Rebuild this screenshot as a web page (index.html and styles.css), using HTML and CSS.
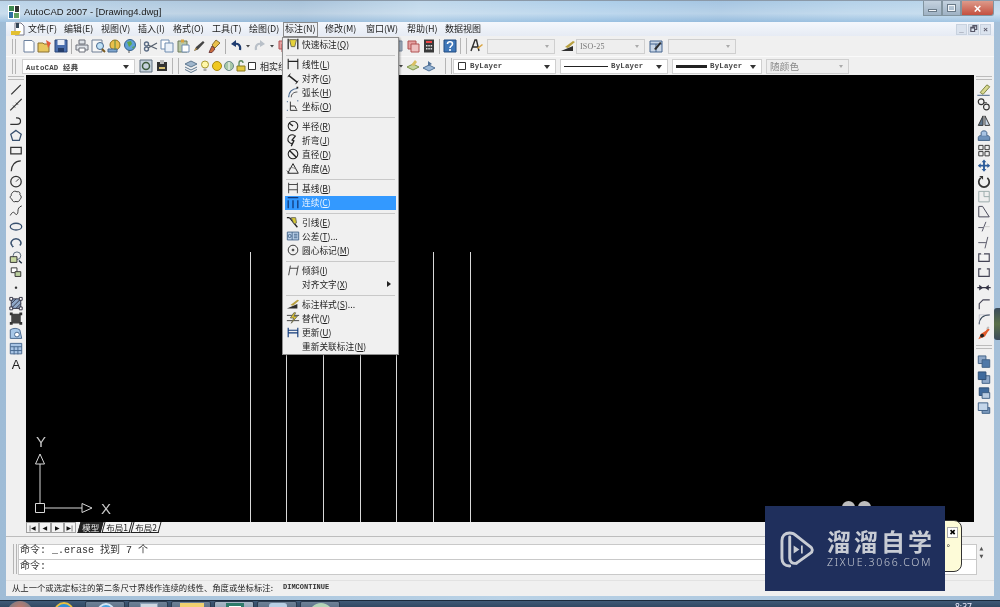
FILE: index.html
```html
<!DOCTYPE html>
<html lang="zh-CN">
<head>
<meta charset="utf-8">
<title>AutoCAD 2007 - [Drawing4.dwg]</title>
<link rel="stylesheet" href="styles.css">
</head>
<body>
<svg class="defs" aria-hidden="true">
<defs>
<symbol id="new" viewBox="0 0 16 16"><path d="M3 2.500h8l2 2v9.500H3z" fill="#fff" stroke="#6a7f9c"/></symbol>
<symbol id="open" viewBox="0 0 16 16"><path d="M1 5h5l1 1h5v8H1z" fill="#e8c860" stroke="#8a7030"/><path d="M9 2l5 3-3 5z" fill="#e25b3a"/></symbol>
<symbol id="save" viewBox="0 0 16 16"><path d="M2 2h12v12H2z" fill="#4a6fae" stroke="#2b4678"/><path d="M4.500 2h7v5h-7z" fill="#e9eef6"/><path d="M5 10h6v4H5z" fill="#243d6b"/></symbol>
<symbol id="print" viewBox="0 0 16 16"><path d="M5 2h6v4H5zM2 7h12v5H2z" fill="#dfe3e8" stroke="#6a6f78"/><path d="M5 10h6v4H5z" fill="#fff" stroke="#6a6f78"/></symbol>
<symbol id="preview" viewBox="0 0 16 16"><path d="M2 2h10v12H2z" fill="#f6f6f6" stroke="#6f7f95"/><circle cx="10" cy="8" r="3.500" fill="#bfe0f5" stroke="#47688f"/><path d="M12 11l3 3" stroke="#7a5a20" stroke-width="2"/></symbol>
<symbol id="publish" viewBox="0 0 16 16"><circle cx="9" cy="7" r="5" fill="#e9c04a" stroke="#927420"/><path d="M2 11h9v3H2z" fill="#7fa6cf" stroke="#47688f"/><path d="M9 2v10" stroke="#5c8a3a"/></symbol>
<symbol id="globe" viewBox="0 0 16 16"><circle cx="8" cy="7" r="5.500" fill="#5fa0d8" stroke="#34608e"/><path d="M5 4l4-1 1 3-3 3zM10 9l3-1-2 3z" fill="#5da54a"/><path d="M7 12.500v2.500" stroke="#555"/></symbol>
<symbol id="cut" viewBox="0 0 16 16"><circle cx="3.500" cy="6" r="2" fill="none" stroke="#5b6c85" stroke-width="1.400"/><circle cx="3.500" cy="11" r="2" fill="none" stroke="#5b6c85" stroke-width="1.400"/><path d="M5 7l9 4M5 10l9-5" stroke="#56606e" stroke-width="1.300"/></symbol>
<symbol id="copy" viewBox="0 0 16 16"><path d="M2 2h8v9H2z" fill="#fff" stroke="#6f8cb0"/><path d="M6 5h8v9H6z" fill="#e9f0f8" stroke="#6f8cb0"/></symbol>
<symbol id="paste" viewBox="0 0 16 16"><path d="M3 3h9v11H3z" fill="#b9c7a5" stroke="#6f7a5a"/><path d="M6 1.500h3v3H6z" fill="#d9a441"/><path d="M7 7h7v7H7z" fill="#fff" stroke="#6f8cb0"/></symbol>
<symbol id="pen" viewBox="0 0 16 16"><path d="M3 13l2-4 7-6 1.500 1.500-6.500 7z" fill="#444"/><path d="M3 13l2-3 1 1z" fill="#d9a441"/></symbol>
<symbol id="match" viewBox="0 0 16 16"><path d="M9 2l4 3-5 5-3-3z" fill="#e9c04a" stroke="#8a7030"/><path d="M5 8l3 3-3 3.500H2z" fill="#c96a3a" stroke="#744"/></symbol>
<symbol id="undo" viewBox="0 0 16 16"><path d="M12 12c1-5-2-7-6-6" fill="none" stroke="#1f3c70" stroke-width="2.200"/><path d="M8 2L3 6l5 3z" fill="#1f3c70"/></symbol>
<symbol id="redo" viewBox="0 0 16 16"><path d="M4 12c-1-5 2-7 6-6" fill="none" stroke="#b9c0c8" stroke-width="2.200"/><path d="M8 2l5 4-5 3z" fill="#b9c0c8"/></symbol>
<symbol id="dd" viewBox="0 0 8 16"><path d="M2 7h4L4 9.500z" fill="#444"/></symbol>
<symbol id="pink" viewBox="0 0 16 16"><path d="M3 3h8v8H3z" fill="#e4a0a0" stroke="#b05050"/><path d="M6 6h8v8H6z" fill="#eec0c0" stroke="#b05050"/></symbol>
<symbol id="gray" viewBox="0 0 16 16"><path d="M3 3h10v10H3z" fill="#a9b7c6" stroke="#74859a"/></symbol>
<symbol id="calc" viewBox="0 0 16 16"><path d="M3 1.500h10v13H3z" fill="#3a3a3a"/><path d="M5 3h6v2H5z" fill="#e44"/><path d="M5 7h1.500v1.500H5zM7.300 7h1.500v1.500H7.300zM9.600 7h1.500v1.500H9.600zM5 10h1.500v1.500H5zM7.300 10h1.500v1.500H7.300zM9.600 10h1.500v1.500H9.600z" fill="#ddd"/></symbol>
<symbol id="help" viewBox="0 0 16 16"><path d="M2 2h12v12H2z" fill="#3f77b8" stroke="#234c80"/><path d="M5.500 6c0-3 5-3 5 0 0 2-2.500 2-2.500 4M8 11v2" fill="none" stroke="#fff" stroke-width="1.600"/></symbol>
<symbol id="tstyle" viewBox="0 0 16 16"><path d="M3 13L7 2h1.500L11 13M4.500 9h6" fill="none" stroke="#2e2e2e" stroke-width="1.400"/><path d="M9 10l5-4 1 1-5 4z" fill="#d9a441"/></symbol>
<symbol id="dstyle" viewBox="0 0 16 16"><path d="M1 13L13 8v5z" fill="#2e2e2e"/><path d="M5 9l8-6 2 1-7 6z" fill="#b8a040"/></symbol>
<symbol id="tbstyle" viewBox="0 0 16 16"><path d="M2 3h12v11H2z" fill="#c9d6e6" stroke="#45648f"/><path d="M2 6h12M8 6v8" stroke="#45648f"/><path d="M6 11l6-7 1.500 1L8 12z" fill="#2e2e2e"/></symbol>
<symbol id="wsp" viewBox="0 0 16 16"><path d="M2 2h12v12H2z" fill="#c7d3dd" stroke="#5f6f7f"/><circle cx="8" cy="8" r="3.500" fill="none" stroke="#3d5c3d" stroke-width="1.500"/></symbol>
<symbol id="wsp2" viewBox="0 0 16 16"><path d="M3 4h10v9H3z" fill="#333"/><path d="M6 2h4v4H6z" fill="#bbb"/><path d="M5 9h6v2H5z" fill="#d8c070"/></symbol>
<symbol id="layers" viewBox="0 0 16 16"><path d="M8 3l6 3-6 3-6-3z" fill="#9fb6cc" stroke="#5f7890"/><path d="M2 9l6 3 6-3M2 11.500l6 3 6-3" fill="none" stroke="#5f7890"/></symbol>
<symbol id="bulb" viewBox="0 0 12 16"><circle cx="6" cy="6.500" r="3.500" fill="#fff7a8" stroke="#a89a30"/><path d="M4.500 10.500h3V13h-3z" fill="#aaa"/></symbol>
<symbol id="sun" viewBox="0 0 12 16"><circle cx="6" cy="8" r="4.500" fill="#f0c820" stroke="#a88a10"/></symbol>
<symbol id="cloud" viewBox="0 0 12 16"><circle cx="6" cy="8" r="4.500" fill="#a8c8a8" stroke="#6a8a8a"/><path d="M6 4v8" stroke="#fff"/></symbol>
<symbol id="lock" viewBox="0 0 12 16"><path d="M2 8h8v5H2z" fill="#e3c840" stroke="#8a7a20"/><path d="M4 8V5c0-3 4-3 4 0" fill="none" stroke="#5f8a5f" stroke-width="1.300"/></symbol>
<symbol id="swatch" viewBox="0 0 10 16"><path d="M1.500 4.500h7v7h-7z" fill="#fff" stroke="#333"/></symbol>
<symbol id="lstate" viewBox="0 0 16 16"><path d="M2 9l6-3 6 3-6 3z" fill="#c4d49a" stroke="#80964a"/><path d="M6 7l4-5 2 2-3 4z" fill="#d9c060"/></symbol>
<symbol id="lprev" viewBox="0 0 16 16"><path d="M2 10l6-3 6 3-6 3z" fill="#9ab7d6" stroke="#4f7096"/><path d="M7 8V3l4 3z" fill="#4f7096"/></symbol>

<symbol id="line" viewBox="0 0 16 16"><path d="M3 13L13 3" stroke="#333" stroke-width="1.300"/></symbol>
<symbol id="xline" viewBox="0 0 16 16"><path d="M2 14L14 2" stroke="#333" stroke-width="1.300"/><path d="M5 9l2 2M8 6l2 2" stroke="#333"/></symbol>
<symbol id="pline" viewBox="0 0 16 16"><path d="M2 12h7c5 0 5-7 0-7H8" fill="none" stroke="#333" stroke-width="1.300"/></symbol>
<symbol id="polygon" viewBox="0 0 16 16"><path d="M8 2.500l5.500 4-2 6.500h-7l-2-6.500z" fill="none" stroke="#38506e" stroke-width="1.300"/></symbol>
<symbol id="rect" viewBox="0 0 16 16"><path d="M2.500 4.500h11v7h-11z" fill="none" stroke="#333" stroke-width="1.300"/></symbol>
<symbol id="arc" viewBox="0 0 16 16"><path d="M3 14C3 8 7 3 13 3" fill="none" stroke="#333" stroke-width="1.300"/></symbol>
<symbol id="circle" viewBox="0 0 16 16"><circle cx="8" cy="8" r="5.500" fill="none" stroke="#333" stroke-width="1.300"/><path d="M8 8l3-3" stroke="#333"/></symbol>
<symbol id="rcloud" viewBox="0 0 16 16"><path d="M4 4c1-2 4-2 5-1 2-1 4 1 3 3 2 1 2 4 0 5 0 2-3 3-4 2-2 1-4 0-4-2-2-1-3-3-1-4 0-1 0-2 1-3z" fill="none" stroke="#333"/></symbol>
<symbol id="spline" viewBox="0 0 16 16"><path d="M2 12c2-4 4-4 5-2s3 1 3-2 1-5 4-6" fill="none" stroke="#333"/></symbol>
<symbol id="ellipse" viewBox="0 0 16 16"><ellipse cx="8" cy="8" rx="6" ry="3.500" fill="none" stroke="#38506e" stroke-width="1.400"/></symbol>
<symbol id="earc" viewBox="0 0 16 16"><path d="M4 11C1 8 4 4 8 4s7 4 4 7" fill="none" stroke="#38506e" stroke-width="1.500"/><path d="M3 10l3 2-2 1z" fill="#38506e"/></symbol>
<symbol id="insert" viewBox="0 0 16 16"><circle cx="9" cy="6" r="4" fill="none" stroke="#567"/><path d="M2 7h7v6H2z" fill="#c8d8a0" stroke="#333"/><path d="M11 11l3 3" stroke="#234" stroke-width="1.500"/></symbol>
<symbol id="make" viewBox="0 0 16 16"><path d="M3 3h6v5H3z" fill="#fff" stroke="#333"/><path d="M7 7h6v5H7z" fill="#bcd0a0" stroke="#333"/></symbol>
<symbol id="point" viewBox="0 0 16 16"><circle cx="8" cy="8" r="1.300" fill="#333"/></symbol>
<symbol id="hatch" viewBox="0 0 16 16"><path d="M3 3h10v10H3z" fill="#8fa8c8" stroke="#334"/><path d="M3 8L8 3M3 13L13 3M8 13l5-5" stroke="#334"/><path d="M1.500 1.500h3v3h-3zM11.500 1.500h3v3h-3zM1.500 11.500h3v3h-3zM11.500 11.500h3v3h-3z" fill="#fff" stroke="#334"/></symbol>
<symbol id="grad" viewBox="0 0 16 16"><path d="M3 3h10v10H3z" fill="#444"/><path d="M1.500 1.500h3v3h-3zM11.500 1.500h3v3h-3zM1.500 11.500h3v3h-3zM11.500 11.500h3v3h-3z" fill="#333"/></symbol>
<symbol id="region" viewBox="0 0 16 16"><path d="M2 4c3-2 7-2 10 0l2 9H2z" fill="#a8c8e8" stroke="#47688f"/><circle cx="9" cy="9" r="2.500" fill="#fff" stroke="#47688f"/></symbol>
<symbol id="table" viewBox="0 0 16 16"><path d="M2 2.500h12v11H2z" fill="#a8c4e4" stroke="#47688f"/><path d="M2 6h12M2 10h12M6 6v8M10 6v8" stroke="#47688f"/></symbol>

<symbol id="erase" viewBox="0 0 16 16"><path d="M4 11l7-8 3 2-7 8z" fill="#d8d890" stroke="#7a8040"/><path d="M1 14h13" stroke="#6a7f9c" stroke-width="1.300"/></symbol>
<symbol id="copyobj" viewBox="0 0 16 16"><circle cx="5" cy="5" r="3" fill="none" stroke="#333" stroke-width="1.200"/><circle cx="10.500" cy="10.500" r="3" fill="none" stroke="#333" stroke-width="1.200"/><path d="M8 6l3 0" stroke="#333"/></symbol>
<symbol id="mirror" viewBox="0 0 16 16"><path d="M7 3L2 13h5z" fill="#5f7890" stroke="#333"/><path d="M9 3l5 10H9z" fill="#c9d6e6" stroke="#333"/></symbol>
<symbol id="offset" viewBox="0 0 16 16"><path d="M2 13V10c0-1 1-2 2-2h8c1 0 2 1 2 2v3z" fill="#6f93bc" stroke="#3f5f85"/><path d="M5 8V5c0-1 1-2 3-2s3 1 3 2v3" fill="#a8c4e4" stroke="#3f5f85"/></symbol>
<symbol id="array" viewBox="0 0 16 16"><path d="M2.500 2.500h4.500v4.500H2.500zM9 2.500h4.500v4.500H9zM2.500 9H7v4.500H2.500zM9 9h4.500v4.500H9z" fill="none" stroke="#333"/></symbol>
<symbol id="move" viewBox="0 0 16 16"><path d="M8 1.500l2.500 3h-1.500v2.500h2.500v-1.500l3 2.500-3 2.500v-1.500h-2.500v2.500h1.500l-2.500 3-2.500-3h1.500v-2.500h-2.500v1.500l-3-2.500 3-2.500v1.500h2.500v-2.500h-1.500z" fill="#2d5c9a"/></symbol>
<symbol id="rotate" viewBox="0 0 16 16"><path d="M4.500 4a5.500 5.500 0 1 0 7 0" fill="none" stroke="#333" stroke-width="1.800"/><path d="M3 2h4v4z" fill="#333"/></symbol>
<symbol id="scale" viewBox="0 0 16 16"><path d="M2.500 2.500h11v11h-11z" fill="#eee" stroke="#9aa"/><path d="M8 2.500v5.500H13.500" fill="none" stroke="#9aa"/></symbol>
<symbol id="stretch" viewBox="0 0 16 16"><path d="M2.500 2.500h4l7 11h-11z" fill="#eee" stroke="#445"/></symbol>
<symbol id="trim" viewBox="0 0 16 16"><path d="M2 9h5" stroke="#556"/><path d="M10 3L6 13" stroke="#556"/><path d="M9 8h5" stroke="#c9c9c9"/></symbol>
<symbol id="extend" viewBox="0 0 16 16"><path d="M2 8h8" stroke="#556"/><path d="M12 2L9 14" stroke="#556"/></symbol>
<symbol id="breakpt" viewBox="0 0 16 16"><path d="M2.500 4h11v8h-11z" fill="#f4f4f4" stroke="#445" stroke-width="1.200"/><path d="M5 4h3" stroke="#f4f4f4" stroke-width="2"/></symbol>
<symbol id="breakl" viewBox="0 0 16 16"><path d="M5 4H2.500v8h11V4H11" fill="none" stroke="#445" stroke-width="1.200"/></symbol>
<symbol id="join" viewBox="0 0 16 16"><path d="M1 8h14" stroke="#334" stroke-width="1.300"/><path d="M3 5l4 3-4 3zM13 5L9 8l4 3z" fill="#334"/></symbol>
<symbol id="chamfer" viewBox="0 0 16 16"><path d="M3 14V8l4-4h7" fill="none" stroke="#445" stroke-width="1.200"/></symbol>
<symbol id="fillet" viewBox="0 0 16 16"><path d="M3 14C3 8 7 4 14 4" fill="none" stroke="#345" stroke-width="1.200"/><path d="M3 14V4h11" fill="none" stroke="#aab" stroke-width=".6"/></symbol>
<symbol id="explode" viewBox="0 0 16 16"><path d="M2 14l3-6 5-3 2-3 2 2-2 2-3 5z" fill="#e05a2a"/><circle cx="6" cy="10" r="2" fill="#222"/><path d="M11 3l2-2" stroke="#bbb" stroke-width="2"/></symbol>
<symbol id="order1" viewBox="0 0 16 16"><path d="M2 2h8v8H2z" fill="#8fa8c8" stroke="#3f5f85"/><path d="M6 6h8v8H6z" fill="#4f78a8" stroke="#3f5f85"/></symbol>
<symbol id="order2" viewBox="0 0 16 16"><path d="M6 6h8v8H6z" fill="#8fa8c8" stroke="#3f5f85"/><path d="M2 2h8v8H2z" fill="#3f6a9c" stroke="#2f4f75"/></symbol>
<symbol id="order3" viewBox="0 0 16 16"><path d="M3 3h10v8H3z" fill="#3f6a9c" stroke="#2f4f75"/><path d="M6 8h8v6H6z" fill="#b8cbe0" stroke="#3f5f85"/></symbol>
<symbol id="order4" viewBox="0 0 16 16"><path d="M6 8h8v6H6z" fill="#7a98bc" stroke="#3f5f85"/><path d="M2 3h10v8H2z" fill="#c4d6ea" stroke="#3f5f85"/></symbol>

<symbol id="qdim" viewBox="0 0 16 16"><path d="M2.500 2v12M13.500 2v12" stroke="#222" stroke-width="1.400"/><path d="M4 3l8 0-2 8-4 0z" fill="#e6d23a" stroke="#665"/></symbol>
<symbol id="dlin" viewBox="0 0 16 16"><path d="M2.500 2v12M13.500 2v12M2.500 5h11" stroke="#222" stroke-width="1.200" fill="none"/></symbol>
<symbol id="dali" viewBox="0 0 16 16"><path d="M3 5l10 8" stroke="#222" stroke-width="1.600"/><path d="M2 7l3-4M11 15l3-4" stroke="#222"/></symbol>
<symbol id="darc" viewBox="0 0 16 16"><path d="M3 14C3 8 7 4 13 4" fill="none" stroke="#47688f" stroke-width="1.400"/><path d="M6 14c0-4 3-6 7-6" fill="none" stroke="#444"/><path d="M12 2h2v2h-2z" fill="#222"/></symbol>
<symbol id="dord" viewBox="0 0 16 16"><path d="M5 3v10h8M5 8h5l2 4" fill="none" stroke="#222"/><path d="M1 3h2M13 2h2M1 13h2" stroke="#47688f" stroke-width="1.500" stroke-dasharray="1 1"/></symbol>
<symbol id="drad" viewBox="0 0 16 16"><circle cx="8" cy="8" r="5.500" fill="none" stroke="#222" stroke-width="1.200"/><path d="M3.500 4.500L8 8" stroke="#222" stroke-width="1.500"/></symbol>
<symbol id="djog" viewBox="0 0 16 16"><path d="M10 3a5 5 0 1 0-2 9" fill="none" stroke="#222" stroke-width="1.200"/><path d="M11 3L7 8l2 1-3 6" fill="none" stroke="#222" stroke-width="1.500"/></symbol>
<symbol id="ddia" viewBox="0 0 16 16"><circle cx="8" cy="8" r="5.500" fill="none" stroke="#222" stroke-width="1.200"/><path d="M4 4l8 8" stroke="#222" stroke-width="1.700"/></symbol>
<symbol id="dang" viewBox="0 0 16 16"><path d="M2 14h12L8 3z" fill="none" stroke="#222" stroke-width="1.100"/><path d="M1 11l3 3" stroke="#222"/><path d="M3 9c2-2 5-2 8 0" fill="none" stroke="#777"/></symbol>
<symbol id="dbase" viewBox="0 0 16 16"><path d="M3 2v12M13 2v12M3 4h10M3 10h10" stroke="#333" fill="none"/></symbol>
<symbol id="dcont" viewBox="0 0 16 16"><path d="M2.500 6v9M8 6v9M13.500 6v9M2 3h12" stroke="#123a7a" stroke-width="1.500" fill="none"/></symbol>
<symbol id="dlead" viewBox="0 0 16 16"><path d="M4 3l9 11" stroke="#222" stroke-width="1.500"/><path d="M6 3l5 0 1 6-3 1z" fill="#d8c830" stroke="#665"/><path d="M1 3h3" stroke="#222" stroke-width="1.500"/></symbol>
<symbol id="dtol" viewBox="0 0 16 16"><path d="M1.500 3.500h13v9h-13z" fill="#bcd2ea" stroke="#3f5f85"/><path d="M7 3.500v9" stroke="#3f5f85"/><circle cx="4.200" cy="8" r="1.800" fill="none" stroke="#3f5f85"/><path d="M9 6h4M9 8h4M9 10h4" stroke="#3f5f85"/></symbol>
<symbol id="dcen" viewBox="0 0 16 16"><circle cx="8" cy="8" r="5.500" fill="none" stroke="#222"/><path d="M8 6.500v3M6.500 8h3" stroke="#222" stroke-width="1.200"/></symbol>
<symbol id="dobl" viewBox="0 0 16 16"><path d="M3 14l2-11M12 14l2-11M4.500 6h9" stroke="#333" fill="none"/></symbol>
<symbol id="dovr" viewBox="0 0 16 16"><path d="M1 5h14M1 11h14" stroke="#333"/><path d="M9 2l-4 6h4l-3 6 7-8H9l2-4z" fill="#e6c92a" stroke="#665"/></symbol>
<symbol id="dupd" viewBox="0 0 16 16"><path d="M2.500 3v11M13.500 3v11M2.500 6h11M2.500 9h11" stroke="#123a7a" stroke-width="1.300" fill="none"/></symbol>
</defs>
</svg>

<div class="screen">
  <div class="window">
    <header class="titlebar">
      <svg class="app-icon" viewBox="0 0 12 14"><path d="M0 0h12v14H0z" fill="#fff"/><path d="M1 1h5v5H1z" fill="#3f8a4f"/><path d="M7 1h4v6H7z" fill="#333"/><path d="M1 7h4v6H1z" fill="#2f6f9f"/><path d="M6 8h5v5H6z" fill="#5fa05f"/></svg>
      <span class="title-text">AutoCAD 2007 - [Drawing4.dwg]</span>
      <div class="win-btns">
        <span class="win-btn"><i class="g-min"></i></span>
        <span class="win-btn"><i class="g-max"></i></span>
        <span class="win-btn win-close">×</span>
      </div>
    </header>
    <div class="client">
      <nav class="menubar">
        <svg class="doc-icon" viewBox="0 0 16 14"><path d="M5 1h6l3 3v9H5z" fill="#fff" stroke="#778"/><path d="M1 9h10l-2 4H1z" fill="#e3c030"/><path d="M6 1h3v5H6z" fill="#345"/></svg>
        <span class="m m1">文件(F)</span><span class="m m2">编辑(E)</span><span class="m m3">视图(V)</span><span class="m m4">插入(I)</span><span class="m m5">格式(O)</span><span class="m m6">工具(T)</span><span class="m m7">绘图(D)</span><span class="m m8 m-on">标注(N)</span><span class="m m9">修改(M)</span><span class="m m10">窗口(W)</span><span class="m m11">帮助(H)</span><span class="m m12">数据视图</span>
        <div class="doc-btns"><span class="doc-btn">_</span><span class="doc-btn">🗗</span><span class="doc-btn">×</span></div>
      </nav>

      <div class="toolbar tb-one">
        <span class="grip"></span>
        <svg class="i"><use href="#new"/></svg><svg class="i"><use href="#open"/></svg><svg class="i"><use href="#save"/></svg>
        <span class="sep"></span>
        <svg class="i"><use href="#print"/></svg><svg class="i"><use href="#preview"/></svg><svg class="i"><use href="#publish"/></svg><svg class="i"><use href="#globe"/></svg>
        <span class="sep"></span>
        <svg class="i"><use href="#cut"/></svg><svg class="i"><use href="#copy"/></svg><svg class="i"><use href="#paste"/></svg><svg class="i"><use href="#pen"/></svg><svg class="i"><use href="#match"/></svg>
        <span class="sep"></span>
        <svg class="i"><use href="#undo"/></svg><svg class="d"><use href="#dd"/></svg><svg class="i"><use href="#redo"/></svg><svg class="d"><use href="#dd"/></svg>
        <svg class="i"><use href="#pink"/></svg>
        <span class="tb-gap-a"></span>
        <svg class="i"><use href="#gray"/></svg><svg class="i"><use href="#pink"/></svg><svg class="i"><use href="#calc"/></svg>
        <span class="sep"></span>
        <svg class="i"><use href="#help"/></svg>
        <span class="sep-g"></span>
        <svg class="i"><use href="#tstyle"/></svg>
        <span class="combo off w68 ml"><b></b></span>
        <svg class="i ml5"><use href="#dstyle"/></svg>
        <span class="combo off w69"><em>ISO-25</em><b></b></span>
        <svg class="i ml"><use href="#tbstyle"/></svg>
        <span class="combo off w68 ml2"><b></b></span>
      </div>

      <div class="toolbar tb-two">
        <span class="grip"></span>
        <span class="combo on w113 ml3"><em class="mono">AutoCAD 经典</em><b></b></span>
        <svg class="i ml"><use href="#wsp"/></svg><svg class="i"><use href="#wsp2"/></svg>
        <span class="sep-g"></span>
        <svg class="i ml"><use href="#layers"/></svg><svg class="n"><use href="#bulb"/></svg><svg class="n"><use href="#sun"/></svg><svg class="n"><use href="#cloud"/></svg><svg class="n"><use href="#lock"/></svg><svg class="s"><use href="#swatch"/></svg>
        <span class="layer-name">相实线</span>
        <svg class="d"><use href="#dd"/></svg>
        <svg class="i"><use href="#lstate"/></svg><svg class="i"><use href="#lprev"/></svg>
        <span class="sep-g sep-wide"></span>
        <span class="combo on w103"><svg class="s"><use href="#swatch"/></svg><em class="mono">ByLayer</em><b></b></span>
        <span class="combo on w108 ml2"><i class="ln"></i><em class="mono">ByLayer</em><b></b></span>
        <span class="combo on w90 ml2"><i class="ln ln-b"></i><em class="mono">ByLayer</em><b></b></span>
        <span class="combo off w83 ml2"><em class="zh">随颜色</em><b></b></span>
      </div>

      <div class="work">
        <aside class="vbar">
          <span class="vgrip"></span>
          <svg class="v"><use href="#line"/></svg><svg class="v"><use href="#xline"/></svg><svg class="v"><use href="#pline"/></svg><svg class="v"><use href="#polygon"/></svg><svg class="v"><use href="#rect"/></svg><svg class="v"><use href="#arc"/></svg><svg class="v"><use href="#circle"/></svg><svg class="v"><use href="#rcloud"/></svg><svg class="v"><use href="#spline"/></svg><svg class="v"><use href="#ellipse"/></svg><svg class="v"><use href="#earc"/></svg><svg class="v"><use href="#insert"/></svg><svg class="v"><use href="#make"/></svg><svg class="v"><use href="#point"/></svg><svg class="v"><use href="#hatch"/></svg><svg class="v"><use href="#grad"/></svg><svg class="v"><use href="#region"/></svg><svg class="v"><use href="#table"/></svg>
          <span class="v-a">A</span>
        </aside>
        <main class="canvas-col">
          <div class="canvas">
            <i class="cad-line l1"></i><i class="cad-line l2"></i><i class="cad-line l3"></i><i class="cad-line l4"></i><i class="cad-line l5"></i><i class="cad-line l6"></i><i class="cad-line l7"></i>
            <svg class="ucs" viewBox="0 0 90 90">
              <g fill="none" stroke="#d8d8d8">
                <path d="M9.500 73.500h9v9h-9zM18.500 78H56M14 73.500V34"/>
                <path d="M56 73.500l10 4.500-10 4.500zM9.500 34L14 24l4.500 10z"/>
              </g>
              <text x="10" y="17" class="ucs-t">Y</text>
              <text x="75" y="84" class="ucs-t">X</text>
            </svg>
            <i class="blob b1"></i><i class="blob b2"></i>
          </div>
          <div class="tabs">
            <span class="nav">|◀</span><span class="nav">◀</span><span class="nav">▶</span><span class="nav">▶|</span>
            <span class="tab tab-on"><span>模型</span></span><span class="tab"><span>布局1</span></span><span class="tab"><span>布局2</span></span>
          </div>
        </main>
        <aside class="vbar">
          <span class="vgrip"></span>
          <svg class="v"><use href="#erase"/></svg><svg class="v"><use href="#copyobj"/></svg><svg class="v"><use href="#mirror"/></svg><svg class="v"><use href="#offset"/></svg><svg class="v"><use href="#array"/></svg><svg class="v"><use href="#move"/></svg><svg class="v"><use href="#rotate"/></svg><svg class="v"><use href="#scale"/></svg><svg class="v"><use href="#stretch"/></svg><svg class="v"><use href="#trim"/></svg><svg class="v"><use href="#extend"/></svg><svg class="v"><use href="#breakpt"/></svg><svg class="v"><use href="#breakl"/></svg><svg class="v"><use href="#join"/></svg><svg class="v"><use href="#chamfer"/></svg><svg class="v"><use href="#fillet"/></svg><svg class="v"><use href="#explode"/></svg>
          <span class="vgrip vgrip-mid"></span>
          <svg class="v"><use href="#order1"/></svg><svg class="v"><use href="#order2"/></svg><svg class="v"><use href="#order3"/></svg><svg class="v"><use href="#order4"/></svg>
        </aside>
      </div>

      <section class="command">
        <span class="cmd-grip"></span>
        <div class="cmd-box">
          <div class="cmd-line">命令: _.erase 找到 7 个</div>
          <div class="cmd-line">命令:</div>
        </div>
        <div class="cmd-scroll"><span>▲</span><span>▼</span></div>
      </section>
      <footer class="status"><span>从上一个或选定标注的第二条尺寸界线作连续的线性、角度或坐标标注:</span><code>DIMCONTINUE</code></footer>
    </div>
  </div>

  <div class="taskbar">
    <i class="orb"></i>
    <span class="task task-bare"><i class="tk tk-ie"></i></span>
    <span class="task"><i class="tk tk-blue"></i></span>
    <span class="task"><i class="tk tk-doc"></i></span>
    <span class="task"><i class="tk tk-folder"></i></span>
    <span class="task task-on"><i class="tk tk-cad"></i></span>
    <span class="task"><i class="tk tk-img"></i></span>
    <span class="task"><i class="tk tk-ball"></i></span>
    <time class="clock">8:37</time>
  </div>

  <div class="menu">
    <div class="mi"><svg class="mic"><use href="#qdim"/></svg>快速标注(<u>Q</u>)</div>
    <hr>
    <div class="mi"><svg class="mic"><use href="#dlin"/></svg>线性(<u>L</u>)</div>
    <div class="mi"><svg class="mic"><use href="#dali"/></svg>对齐(<u>G</u>)</div>
    <div class="mi"><svg class="mic"><use href="#darc"/></svg>弧长(<u>H</u>)</div>
    <div class="mi"><svg class="mic"><use href="#dord"/></svg>坐标(<u>O</u>)</div>
    <hr>
    <div class="mi"><svg class="mic"><use href="#drad"/></svg>半径(<u>R</u>)</div>
    <div class="mi"><svg class="mic"><use href="#djog"/></svg>折弯(<u>J</u>)</div>
    <div class="mi"><svg class="mic"><use href="#ddia"/></svg>直径(<u>D</u>)</div>
    <div class="mi"><svg class="mic"><use href="#dang"/></svg>角度(<u>A</u>)</div>
    <hr>
    <div class="mi"><svg class="mic"><use href="#dbase"/></svg>基线(<u>B</u>)</div>
    <div class="mi mi-on"><svg class="mic"><use href="#dcont"/></svg>连续(<u>C</u>)</div>
    <hr>
    <div class="mi"><svg class="mic"><use href="#dlead"/></svg>引线(<u>E</u>)</div>
    <div class="mi"><svg class="mic"><use href="#dtol"/></svg>公差(<u>T</u>)...</div>
    <div class="mi"><svg class="mic"><use href="#dcen"/></svg>圆心标记(<u>M</u>)</div>
    <hr>
    <div class="mi"><svg class="mic"><use href="#dobl"/></svg>倾斜(<u>I</u>)</div>
    <div class="mi mi-sub"><span class="mic"></span>对齐文字(<u>X</u>)</div>
    <hr>
    <div class="mi"><svg class="mic"><use href="#dstyle"/></svg>标注样式(<u>S</u>)...</div>
    <div class="mi"><svg class="mic"><use href="#dovr"/></svg>替代(<u>V</u>)</div>
    <div class="mi"><svg class="mic"><use href="#dupd"/></svg>更新(<u>U</u>)</div>
    <div class="mi"><span class="mic"></span>重新关联标注(<u>N</u>)</div>
  </div>

  <div class="balloon"><span class="balloon-x">✖</span><span class="balloon-dot">°</span></div>
  <i class="frame-notch"></i>

  <aside class="watermark">
    <svg class="wm-logo" viewBox="0 0 36 38">
      <path d="M10 36C5 36 2 33 2 28V10C2 5 5 2 10 2c3 0 5 1 7 3l14 11c3 2 3 5 0 7L17 33" fill="none" stroke="#c8ccd4" stroke-width="3" stroke-linecap="round"/>
      <path d="M10 6v22c0 4 3 6 7 5" fill="none" stroke="#c8ccd4" stroke-width="3" stroke-linecap="round"/>
      <path d="M14 15l6 4-6 4z" fill="#c8ccd4"/><path d="M22.500 15v8" stroke="#c8ccd4" stroke-width="1.800"/>
    </svg>
    <div class="wm-text">
      <strong>溜溜自学</strong>
      <span>ZIXUE.3066.COM</span>
    </div>
  </aside>
</div>
</body>
</html>
```

FILE: styles.css
```css
* { box-sizing: border-box; }
html, body { margin: 0; padding: 0; width: 1000px; height: 607px; overflow: hidden; background: #24384f; }
body { font-family: "Noto Sans CJK SC", "Liberation Sans", sans-serif; font-size: 8.6px; color: #222; }
.defs { position: absolute; width: 0; height: 0; }

.screen { position: relative; width: 1000px; height: 607px; display: flex; flex-direction: column; overflow: hidden; filter: blur(.5px); }

.window { flex: 0 0 597px; display: flex; flex-direction: column; padding: 0 6px 4px 6px;
  background: linear-gradient(90deg, #9fbcd6 0, #b9d2e6 50%, #a5c0d9 100%); }

.titlebar { flex: 0 0 22px; margin: 0 -6px; padding: 0 6px; display: flex; align-items: center; position: relative;
  border-top: 1px solid #8b99a8;
  background:
    linear-gradient(180deg, rgba(255,255,255,.05) 0, rgba(255,255,255,.25) 60%, rgba(130,175,215,.4) 100%),
    linear-gradient(90deg, #b8d2e8 0, #adc8df 15%, #a3bfd8 30%, #bdd6ea 42%, #a8cbe8 60%, #a0c2e0 72%, #b0cfe8 85%, #bad5ea 100%); }
.app-icon { width: 12px; height: 14px; margin-left: 2px; }
.title-text { margin-left: 4px; font: 9.5px "Liberation Sans", sans-serif; color: #1a1a1a; }
.win-btns { position: absolute; right: 6px; top: 0; display: flex; height: 15px; }
.win-btn { width: 19px; display: flex; align-items: center; justify-content: center; background: linear-gradient(180deg, #c4d2df, #9fb2c4); border: 1px solid #82949f; border-top: 0; }
.g-min { width: 9px; height: 3px; background: #f2f5f8; border: 1px solid #6a7a88; margin-top: 4px; }
.g-max { width: 9px; height: 8px; border: 1px solid #6a7a88; box-shadow: inset 0 0 0 1px #f2f5f8; }
.win-close { width: 33px; background: linear-gradient(180deg, #dd9a8a, #c4503f); color: #fff; font: bold 13px/13px "Liberation Sans", sans-serif; border-radius: 0 0 3px 0; }

.client { flex: 1 1 auto; min-height: 0; display: flex; flex-direction: column; background: #f0f0f0; }

.menubar { flex: 0 0 14px; position: relative; display: flex; align-items: center; background: linear-gradient(180deg, #f4f7fc, #e6ebf4); font-size: 9px; }
.doc-icon { width: 16px; height: 14px; margin-left: 4px; }
.m { position: absolute; top: 0; height: 15px; line-height: 14px; white-space: nowrap; }
.m1 { left: 22px; } .m2 { left: 58px; } .m3 { left: 95px; } .m4 { left: 132px; } .m5 { left: 167px; } .m6 { left: 206px; }
.m7 { left: 243px; } .m8 { left: 277px; } .m9 { left: 319px; } .m10 { left: 360px; } .m11 { left: 401px; } .m12 { left: 439px; }
.m-on { width: 35px; padding-left: 1px; border: 1px solid #8a8a8a; background: #edf0f5; line-height: 12px; }
.doc-btns { position: absolute; right: 3px; top: 2px; display: flex; gap: 1px; }
.doc-btn { width: 11px; height: 11px; background: #dbe3ee; border: 1px solid #c8d2df; font: bold 8px/9px "Liberation Sans", "DejaVu Sans", sans-serif; color: #556; text-align: center; overflow: hidden; }

.toolbar { display: flex; align-items: center; padding-left: 6px; background: #f0f0f0; }
.tb-one { flex: 0 0 20px; }
.tb-two { flex: 0 0 19px; border-top: 1px solid #fafafa; }
.grip { width: 4px; height: 15px; margin-right: 5px; border-left: 1px solid #b5b5b5; border-right: 1px solid #b5b5b5; }
.i { width: 16px; height: 16px; flex: none; }
.d { width: 8px; height: 16px; flex: none; }
.n { width: 12px; height: 16px; flex: none; }
.s { width: 10px; height: 16px; flex: none; }
.sep { width: 5px; height: 15px; flex: none; position: relative; }
.sep::after { content: ""; position: absolute; left: 2px; top: 0; bottom: 0; border-left: 1px solid #aeaeae; }
.sep-g { width: 7px; height: 16px; flex: none; margin: 0 1px 0 2px; border-left: 1px solid #b5b5b5; border-right: 1px solid #b5b5b5; }
.sep-wide { margin-left: 8px; }
.tb-gap-a { width: 97px; flex: none; }
.ml { margin-left: 3px; }
.ml2 { margin-left: 4px; }
.ml3 { margin-left: 1px; }
.ml5 { margin-left: 5px; }
.combo { position: relative; height: 15px; flex: none; display: flex; align-items: center; gap: 3px; padding-left: 3px; border: 1px solid #cfcfcf; font: 7.6px "Liberation Mono", "Noto Sans CJK SC", monospace; }
.combo em { font-style: normal; font-family: "Liberation Serif", "Noto Sans CJK SC", serif; font-size: 8px; letter-spacing: .2px; }
.combo em.mono { font-family: "Liberation Mono", "Noto Sans CJK SC", monospace; font-size: 7.4px; font-weight: bold; color: #444; }
.combo em.zh { font-family: "Noto Sans CJK SC", sans-serif; font-size: 9.500px; color: #888; }
.combo b { position: absolute; right: 5px; top: 5px; border: 3px solid transparent; border-top: 4px solid #333; border-bottom: 0; }
.on { background: #fff; }
.off { background: #eee; color: #777; }
.off b { border-top-color: #aaa; border-width: 3px 2.500px 0; }
.w68 { width: 68px; } .w69 { width: 69px; } .w113 { width: 113px; } .w103 { width: 103px; } .w108 { width: 108px; } .w90 { width: 90px; } .w83 { width: 83px; }
.ln { width: 44px; height: 1px; background: #222; flex: none; }
.w90 .ln { width: 31px; }
.ln-b { height: 3px; }
.layer-name { width: 140px; flex: none; font-size: 9px; padding-left: 3px; }

.work { flex: 0 0 458px; display: flex; min-height: 0; }
.vbar { flex: 0 0 20px; display: flex; flex-direction: column; align-items: center; padding-top: 1px; }
.vgrip { flex: none; width: 16px; height: 4px; border-top: 1px solid #bcbcbc; border-bottom: 1px solid #bcbcbc; margin-bottom: 2px; }
.vgrip-mid { margin: 4px 0 5px; height: 4px; }
.v { flex: none; width: 16px; height: 15.250px; }
.v-a { flex: none; font: 13px/15px "Liberation Sans", sans-serif; color: #222; }

.canvas-col { flex: 1 1 auto; min-width: 0; display: flex; flex-direction: column; }
.canvas { flex: 0 0 447px; position: relative; background: #000; }
.cad-line { position: absolute; top: 177px; bottom: 0; width: 1px; background: #d8d8d8; }
.l1 { left: 224px; } .l2 { left: 260px; } .l3 { left: 297px; } .l4 { left: 334px; } .l5 { left: 370px; } .l6 { left: 407px; } .l7 { left: 444px; }
.ucs { position: absolute; left: 0; top: 355px; width: 90px; height: 90px; overflow: visible; }
.ucs-t { font: 300 15px "Liberation Sans", sans-serif; fill: #c8c8c8; }
.blob { position: absolute; top: 426px; width: 13px; height: 12px; border-radius: 50%; background: #bdbdbd; }
.b1 { left: 816px; } .b2 { left: 832px; }

.tabs { flex: 0 0 11px; display: flex; align-items: center; overflow: visible; }
.nav { width: 12.500px; height: 11px; border: 1px solid #a0a0a0; font: 6px/9px "DejaVu Sans", sans-serif; color: #111; text-align: center; background: #f3f3f3; overflow: hidden; }
.tab { height: 11px; padding: 0 2px; margin-left: 1px; transform: skewX(-15deg); border: 1px solid #222; border-top: 0; background: #f5f5f5; font-size: 8.5px; line-height: 10px; }
.tab span { display: block; transform: skewX(15deg); }
.tab-on { background: #222; color: #eee; margin-left: 3px; }

.command { flex: 0 0 44px; margin-top: 3px; position: relative; display: flex; border-top: 1px solid #bdbdbd; padding: 7px 8px 0 7px; }
.cmd-grip { width: 4px; height: 30px; flex: none; margin-right: 1px; border-left: 1px solid #b5b5b5; border-right: 1px solid #b5b5b5; }
.cmd-box { flex: 1 1 auto; min-width: 0; display: flex; flex-direction: column; background: #fff; border: 1px solid #c9c9c9; height: 31px; }
.cmd-line { height: 15px; padding-left: 1px; font: 10px/14px "Liberation Mono", "Noto Sans CJK SC", monospace; color: #333; }
.cmd-line:first-child { border-bottom: 1px solid #c9c9c9; height: 16px; line-height: 12px; }
.cmd-scroll { flex: 0 0 9px; display: flex; flex-direction: column; justify-content: space-around; height: 17px; font: 5px/5px "DejaVu Sans", sans-serif; text-align: center; color: #555; }

.status { flex: 1 1 auto; padding: 0 0 3px 6px; display: flex; align-items: center; gap: 10px; border-top: 1px solid #e2e2e2; font-size: 8.35px; color: #222; white-space: nowrap; }
.status code { font: bold 7px "Liberation Mono", monospace; color: #333; }

.taskbar { flex: 0 0 10px; display: flex; align-items: flex-start; gap: 3px; position: relative; overflow: hidden; padding-left: 42px;
  background: linear-gradient(180deg, #405a77, #2a3f58); border-top: 1px solid #1b2a3c; }
.orb { position: absolute; left: 7px; top: 0; width: 26px; height: 26px; border-radius: 50%; background: radial-gradient(circle at 50% 30%, #c97a6a, #5f7d8e 70%); }
.task { flex: 0 0 40px; height: 14px; position: relative; background: linear-gradient(180deg, #6f8297, #4a6078); border: 1px solid #2a3b4f; border-radius: 2px; }
.task-bare { background: none; border: 0; }
.task-on { background: linear-gradient(180deg, #aab9c8, #7f92a8); }
.tk { position: absolute; left: 11px; top: 1px; width: 18px; height: 18px; }
.tk-ie { left: 12px; top: 1px; border-radius: 50%; background: #2f8fd8; border: 2px solid #e8c040; width: 20px; height: 20px; }
.tk-blue { border-radius: 50%; background: #4aa3e0; border: 2px solid #cfe6f5; }
.tk-doc { background: #cfd8e2; border: 1px solid #8da2b8; }
.tk-folder { background: #f0d070; left: 8px; width: 24px; }
.tk-cad { background: #fff; border: 3px solid #2f7a6a; }
.tk-img { background: #b8cfe4; border-radius: 3px; }
.tk-ball { border-radius: 50%; background: #b4d4b8; width: 24px; height: 24px; left: 8px; }
.clock { position: absolute; left: 955px; top: 1px; font: 8.500px/10px "Noto Sans", sans-serif; color: #eef; }

.menu { position: absolute; left: 282px; top: 37px; width: 117px; height: 318px; padding: 0 2px; background: #f0f0f0; border: 1px solid #8f8f8f; box-shadow: 1px 1px 2px rgba(0,0,0,.4); font-size: 8.7px; z-index: 3; }
.menu hr { height: 6px; margin: 0 1px; border: 0; background: linear-gradient(#c9c9c9, #c9c9c9) center / 100% 1px no-repeat; }
.mi { height: 14px; display: flex; align-items: center; white-space: nowrap; padding: 0 0 2px 1px; position: relative; color: #222; }
.mic { width: 14px; height: 14px; margin-right: 2px; flex: none; }
.mi-on { background: #3399ff; color: #eaf4ff; }
.mi-sub::after { content: ""; position: absolute; right: 5px; top: 3px; border: 3px solid transparent; border-left: 4px solid #222; border-right: 0; }

.balloon { position: absolute; left: 925px; top: 520px; width: 37px; height: 52px; background: #fdfbd8; border: 1px solid #333; border-radius: 8px; z-index: 2; }
.balloon-x { position: absolute; right: 3px; top: 6px; width: 11px; height: 11px; font: bold 8px/10px "DejaVu Sans", sans-serif; text-align: center; background: #fff; border: 1px solid #aaa; color: #000; }
.balloon-dot { position: absolute; right: 11px; top: 22px; font: 9px/10px "Liberation Sans", sans-serif; }
.frame-notch { position: absolute; left: 994px; top: 308px; width: 6px; height: 32px; background: linear-gradient(180deg, #3a4a5a, #5a7048 50%, #3a4a5a); border-radius: 3px 0 0 3px; }

.watermark { position: absolute; left: 765px; top: 506px; width: 180px; height: 85px; display: flex; align-items: center; padding-left: 15px; gap: 12px; background: #1f2f5c; z-index: 4; }
.wm-logo { width: 35px; height: 37px; flex: none; margin-top: 1px; }
.wm-text { display: flex; flex-direction: column; color: #c8ccd4; margin-top: -2px; }
.wm-text strong { font: 700 24px/26px "Noto Sans CJK SC", sans-serif; letter-spacing: 3px; white-space: nowrap; }
.wm-text span { font: 300 10.500px/12px "Noto Sans", sans-serif; letter-spacing: 1.750px; white-space: nowrap; margin-top: 2px; }
```
